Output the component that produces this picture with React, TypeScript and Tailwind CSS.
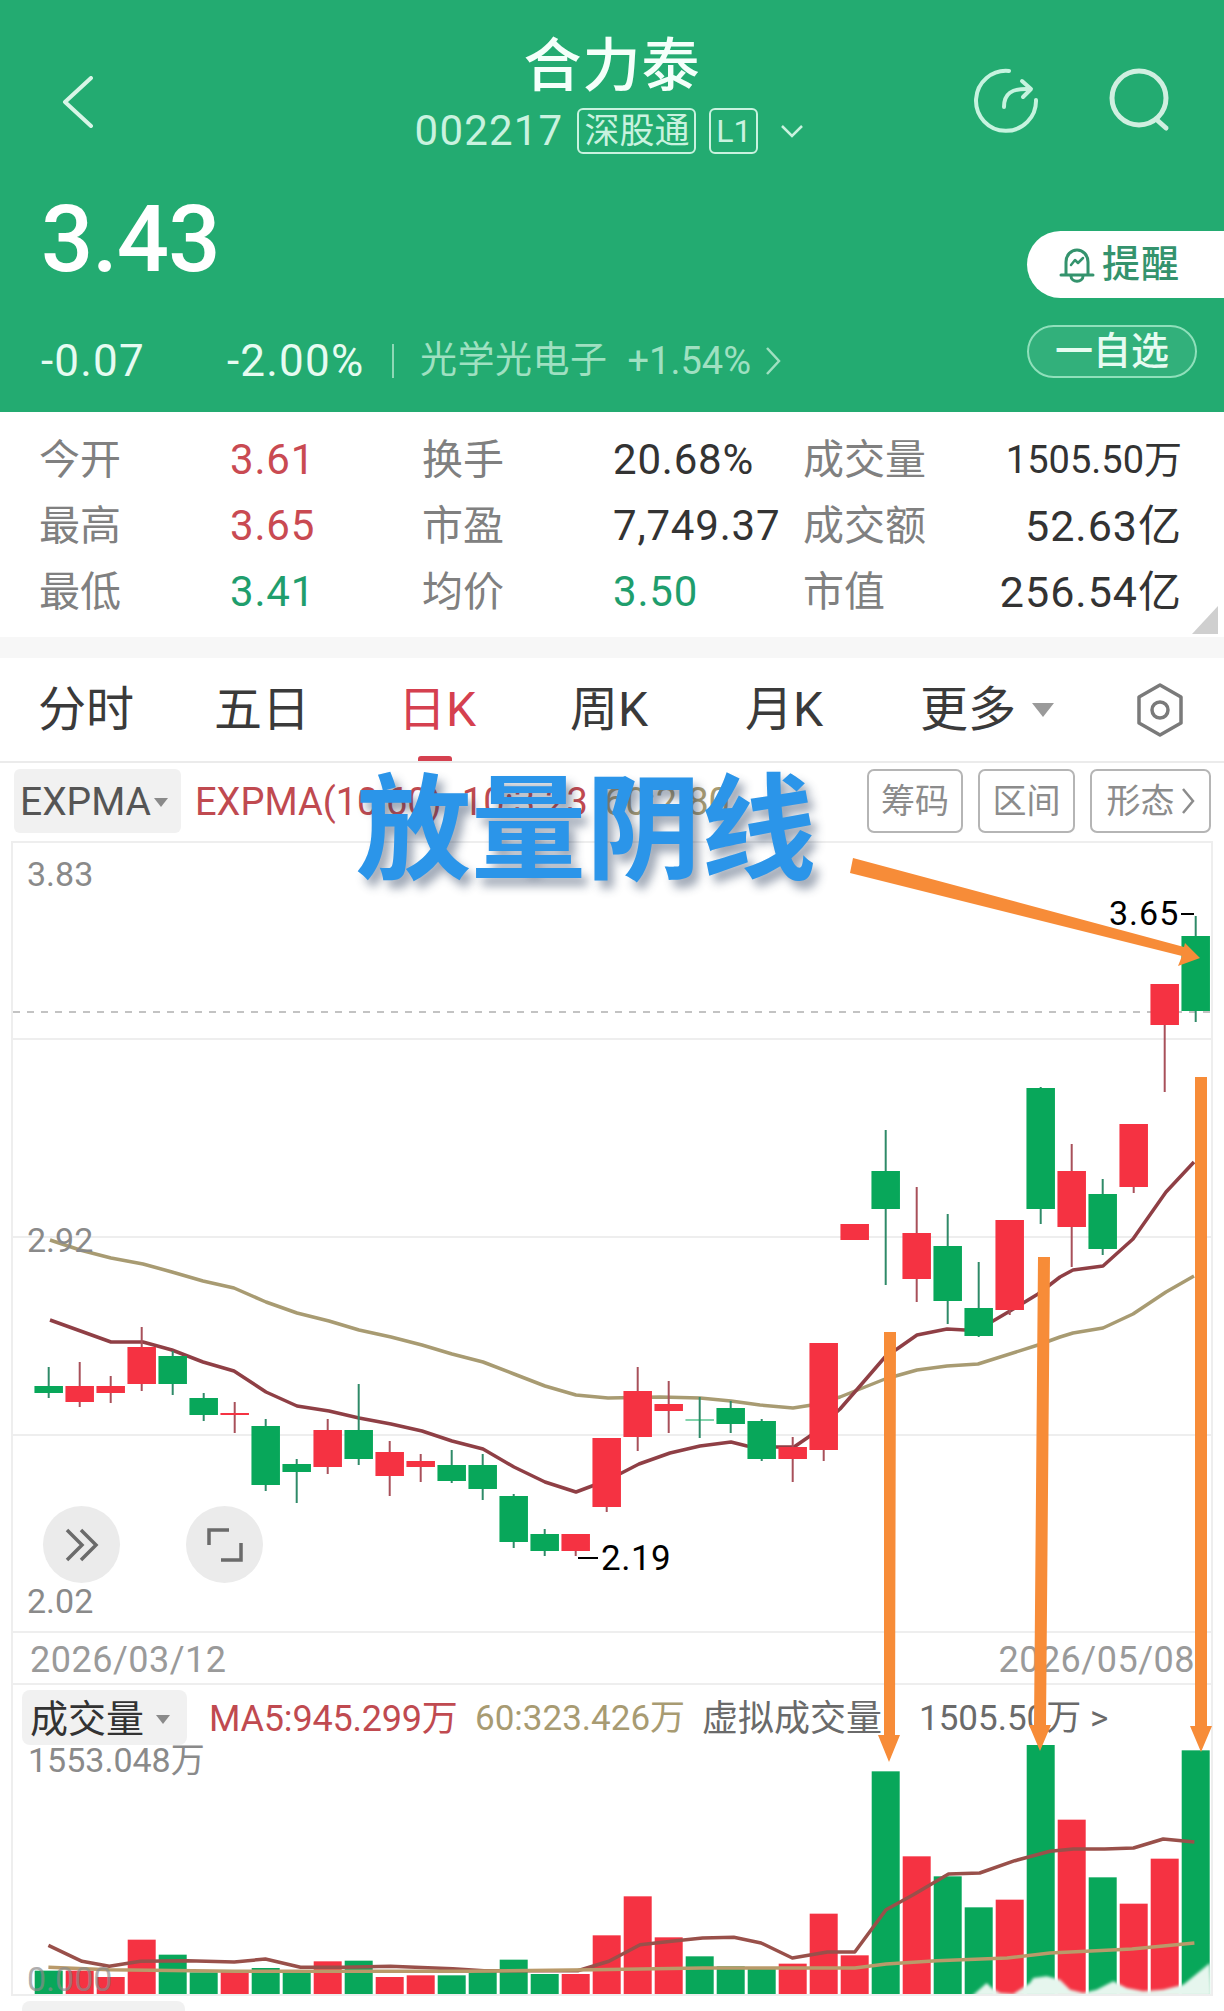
import React from "react";

type C = ["r" | "g", number, number, number, number];
const candles: C[] = [
  ["g", 1387, 1394, 1368, 1399],
  ["r", 1387, 1403, 1363, 1408],
  ["r", 1387, 1394, 1377, 1404],
  ["r", 1348, 1385, 1328, 1392],
  ["g", 1357, 1385, 1352, 1396],
  ["g", 1399, 1416, 1394, 1422],
  ["r", 1414, 1416, 1403, 1434],
  ["g", 1427, 1486, 1420, 1492],
  ["g", 1465, 1473, 1460, 1504],
  ["r", 1431, 1468, 1420, 1475],
  ["g", 1431, 1460, 1385, 1466],
  ["r", 1453, 1477, 1442, 1497],
  ["r", 1462, 1468, 1455, 1483],
  ["g", 1466, 1482, 1451, 1484],
  ["g", 1466, 1490, 1455, 1501],
  ["g", 1497, 1543, 1495, 1549],
  ["g", 1535, 1552, 1530, 1557],
  ["r", 1535, 1552, 1535, 1557],
  ["r", 1439, 1508, 1439, 1513],
  ["r", 1392, 1438, 1368, 1452],
  ["r", 1405, 1412, 1382, 1434],
  ["g", 1420.5, 1421.5, 1398, 1439],
  ["g", 1409, 1425, 1402, 1434],
  ["g", 1422, 1460, 1420, 1462],
  ["r", 1448, 1460, 1438, 1483],
  ["r", 1344, 1451, 1344, 1462],
  ["r", 1225, 1241, 1225, 1241],
  ["g", 1172, 1210, 1131, 1286],
  ["r", 1234, 1280, 1188, 1303],
  ["g", 1247, 1302, 1215, 1325],
  ["g", 1309, 1337, 1263, 1338],
  ["r", 1221, 1311, 1221, 1316],
  ["g", 1089, 1210, 1088, 1225],
  ["r", 1172, 1228, 1145, 1268],
  ["g", 1195, 1250, 1180, 1256],
  ["r", 1125, 1188, 1125, 1194],
  ["r", 985, 1026, 985, 1093],
  ["g", 937, 1012, 917, 1023],
];

const cx = (i: number) => 48.7 + 31 * i;

const redLine =
  "50,1321 111,1343 143,1343 172,1351 203,1363 234,1372 266,1393 297,1407 329,1412 359,1419 391,1425 422,1432 452,1442 483,1450 514,1468 545,1483 576,1493 608,1481 639,1465 670,1454 700,1447 731,1443 747,1447 777,1448 794,1448 810,1437 840,1410 860,1387 885,1358 897,1350 917,1336 947,1330 965,1331 993,1322 1010,1312 1038,1295 1060,1278 1073,1271 1103,1267 1133,1240 1166,1193 1194,1163";
const tanLine =
  "50,1241 80,1251 111,1259 143,1265 172,1273 203,1282 234,1289 266,1303 297,1314 329,1322 359,1331 391,1338 422,1346 452,1355 483,1363 514,1375 545,1387 576,1396 608,1399 660,1398 700,1399 731,1402 760,1406 793,1409 812,1406 840,1398 860,1390 885,1380 917,1371 947,1367 978,1365 1038,1346 1060,1338 1073,1334 1103,1329 1133,1315 1166,1293 1194,1277";

const volTops = [878, 878, 897, 785, 830, 883, 877, 870, 877, 850, 848, 897, 892, 892, 878, 845, 888, 888, 772, 655, 778, 835, 865, 868, 857, 707, 832, 280, 535, 595, 688, 665, 197, 425, 598, 677, 542, 217];

const zoomPts = (s: string) =>
  s
    .trim()
    .split(/\s+/)
    .map((p) => {
      const [x, y] = p.split(",").map(Number);
      return `${(x / 1.281).toFixed(1)},${(1680 + y / 3).toFixed(1)}`;
    })
    .join(" ");

const volRed = zoomPts(
  "62,802 105,850 140,865 180,850 240,848 300,852 340,843 385,868 440,868 500,865 580,872 620,878 740,878 780,850 820,800 860,790 900,780 940,778 975,795 1015,840 1060,822 1095,822 1135,695 1170,650 1215,588 1255,585 1300,548 1345,520 1375,513 1415,513 1452,510 1490,483 1530,492"
);
const volTan = zoomPts(
  "62,868 140,875 300,880 600,880 760,875 900,870 1095,870 1135,858 1200,848 1290,840 1345,825 1450,813 1530,795"
);

const waterPts = "215,295 260,255 275,270 300,285 340,288 390,255 400,240 440,235 480,245 510,275 550,285 590,275 640,250 680,270 730,280 790,275 850,260 930,195 935,295"
  .split(" ")
  .map((p) => {
    const [x, y] = p.split(",").map(Number);
    return `${(900 + x / 3).toFixed(1)},${(1900 + y / 3).toFixed(1)}`;
  })
  .join(" ");

const font = "[font-family:Roboto,'Noto_Sans_CJK_SC',sans-serif]";

function Label({ children }: { children: React.ReactNode }) {
  return <div className="text-[41px] leading-[66px] text-[#808080]">{children}</div>;
}
function Val({ children, tone, right }: { children: React.ReactNode; tone: string; right?: boolean }) {
  return <div className={`text-[42px] leading-[66px] tracking-[0.8px] whitespace-nowrap ${tone} ${right ? "text-right" : ""}`}>{children}</div>;
}

function ToolBtn({ children, w }: { children: React.ReactNode; w: string }) {
  return (
    <div className={`${w} h-[64px] flex items-center justify-center rounded-[7px] border-2 border-[#b5b5b5] text-[34px] text-[#8c8c8c]`}>
      {children}
    </div>
  );
}

export default function App() {
  return (
    <div className={`relative w-[1224px] h-[2011px] overflow-hidden bg-white ${font}`}>
      {/* header */}
      <div className="h-[412px] bg-[#23ab71]">
        <div className="grid grid-cols-[1fr_auto_1fr] pt-[33px] h-[154px]">
          <div className="pl-[62px] pt-[43px]">
            <svg width="32" height="52" viewBox="0 0 32 52" fill="none">
              <path d="M29 2 L3 26 L29 50" stroke="#d8f5e7" strokeWidth="4" strokeLinecap="round" strokeLinejoin="round" />
            </svg>
          </div>
          <div className="flex flex-col items-center">
            <div className="text-[58px] leading-[66px] font-medium text-[#f4fffa] tracking-[1px]">合力泰</div>
            <div className="mt-[9px] flex items-center h-[46px] text-[#c9f2df]">
              <span className="text-[42px] tracking-[1.2px] leading-[46px]">002217</span>
              <span className="ml-[14px] w-[119px] h-[46px] flex items-center justify-center rounded-[6px] border-2 border-[#c9f2df] text-[35px] leading-none">深股通</span>
              <span className="ml-[13px] w-[49px] h-[46px] flex items-center justify-center rounded-[6px] border-2 border-[#c9f2df] text-[32px] leading-none">L1</span>
              <svg className="ml-[22px] mr-[5px]" width="24" height="14" viewBox="0 0 24 14" fill="none">
                <path d="M2 2 L12 12 L22 2" stroke="#c9f2df" strokeWidth="2.5" />
              </svg>
            </div>
          </div>
          <div className="flex justify-end pr-[49px] pt-[35px] gap-[70px]">
            <svg width="66" height="68" viewBox="0 0 66 68" fill="none" stroke="#c6f3df" strokeWidth="4" strokeLinecap="round" strokeLinejoin="round">
              <path d="M36 3 A30 30 0 1 0 63 32" />
              <path d="M31 39 C31 26 38 20 57 21" />
              <path d="M49 13 L58 21 L50 29" />
            </svg>
            <svg width="66" height="68" viewBox="0 0 66 68" fill="none" stroke="#d0efe0" strokeWidth="5" strokeLinecap="round">
              <circle cx="30" cy="30" r="27" />
              <path d="M48 52 L57 60" />
            </svg>
          </div>
        </div>
        <div className="flex justify-between">
          <div className="pl-[41px] pt-[36px]">
            <div className="text-[92px] leading-[100px] font-medium text-white tracking-[-1px]">3.43</div>
            <div className="mt-[46px] flex items-center h-[50px] text-[#c9f2df]">
              <span className="w-[186px] text-[44px] tracking-[1.2px] text-[#e6fbf1]">-0.07</span>
              <span className="w-[165px] text-[44px] tracking-[1.2px] text-[#e6fbf1]">-2.00%</span>
              <span className="w-[2px] h-[34px] bg-[#8fd8b6]" />
              <span className="ml-[26px] text-[37px] text-[#9fe0c1] tracking-[0.5px]">光学光电子</span>
              <span className="ml-[20px] text-[38px] text-[#9fe0c1]">+1.54%</span>
              <svg className="ml-[14px]" width="16" height="30" viewBox="0 0 16 30" fill="none">
                <path d="M2 2 L14 15 L2 28" stroke="#9fe0c1" strokeWidth="2.5" />
              </svg>
            </div>
          </div>
          <div className="pt-[77px] flex flex-col items-end">
            <div className="w-[197px] h-[67px] bg-white rounded-l-[34px] flex items-center pl-[31px] text-[#34936d] text-[38px] font-medium">
              <svg width="38" height="38" viewBox="0 0 38 38" fill="none" stroke="#34936d" strokeWidth="3" strokeLinecap="round" strokeLinejoin="round">
                <path d="M8 28 V16 C8 9 13 4 19 4 C25 4 30 9 30 16 V28" />
                <path d="M3 29 H35" />
                <path d="M13 30 C13 37 25 37 25 30" />
                <path d="M13 19 L17 14 L20 17 L25 12" strokeWidth="2.5" />
              </svg>
              <span className="ml-[6px] tracking-[1px]">提醒</span>
            </div>
            <div className="mt-[27px] mr-[27px] w-[170px] h-[53px] rounded-[27px] border-2 border-[#8fe0bb] bg-[#32b07b] flex items-center justify-center text-[38px] font-medium text-[#e6fbf1]">
              一自选
            </div>
          </div>
        </div>
      </div>

      {/* stats */}
      <div className="relative pt-[15px] pl-[39px] pr-[42px] grid grid-cols-[191px_192px_191px_190px_150px_1fr] h-[225px] content-start">
        <Label>今开</Label>
        <Val tone="text-[#c94a52]">3.61</Val>
        <Label>换手</Label>
        <Val tone="text-[#333333]">20.68%</Val>
        <Label>成交量</Label>
        <div className="text-[38px] leading-[66px] whitespace-nowrap text-[#333333] text-right">1505.50万</div>
        <Label>最高</Label>
        <Val tone="text-[#c94a52]">3.65</Val>
        <Label>市盈</Label>
        <Val tone="text-[#333333]">7,749.37</Val>
        <Label>成交额</Label>
        <div className="text-[43px] leading-[66px] tracking-[1px] whitespace-nowrap text-[#333333] text-right">52.63亿</div>
        <Label>最低</Label>
        <Val tone="text-[#1f9e6d]">3.41</Val>
        <Label>均价</Label>
        <Val tone="text-[#1f9e6d]">3.50</Val>
        <Label>市值</Label>
        <div className="text-[43px] leading-[66px] tracking-[1px] whitespace-nowrap text-[#333333] text-right">256.54亿</div>
        <div className="absolute right-[6px] bottom-[3px] w-0 h-0 border-l-[26px] border-l-transparent border-b-[28px] border-b-[#cfcfcf]" />
      </div>
      <div className="h-[21px] bg-[#f7f7f7]" />

      {/* tabs */}
      <div className="h-[105px] grid grid-cols-[176px_184px_172px_175px_175px_215px_1fr] pl-[38px] items-center border-b-2 border-[#ebebeb] text-[48px] leading-none text-[#3a3a3a]">
        <span>分时</span>
        <span>五日</span>
        <span className="relative h-full flex items-center text-[#d5404f]">
          日K
          <span className="absolute left-[20px] bottom-0 w-[34px] h-[5px] rounded-t-[3px] bg-[#d5404f]" />
        </span>
        <span>周K</span>
        <span>月K</span>
        <span className="flex items-center">
          更多
          <span className="ml-[16px] w-0 h-0 border-x-[11px] border-x-transparent border-t-[14px] border-t-[#9a9a9a]" />
        </span>
        <svg width="50" height="56" viewBox="0 0 50 56" fill="none" stroke="#7a7a7a" strokeWidth="3.5">
          <path d="M25 3 L46 15 V41 L25 53 L4 41 V15 Z" strokeLinejoin="round" />
          <circle cx="25" cy="28" r="8" />
        </svg>
      </div>

      {/* toolbar */}
      <div className="h-[78px] pt-[6px] pl-[14px] pr-[13px] flex">
        <div className="w-[167px] h-[64px] rounded-[6px] bg-[#f1f1f1] flex items-center pl-[6px] pt-[3px] text-[39px] text-[#555555]">
          EXPMA
          <span className="ml-[3px] w-0 h-0 border-x-[7px] border-x-transparent border-t-[9px] border-t-[#8a8a8a]" />
        </div>
        <div className="ml-[14px] h-[64px] pt-[3px] flex items-center text-[38px] text-[#c04a50] whitespace-nowrap">
          <span>EXPMA(10,60)</span>
          <span className="ml-[20px]">10:3.23</span>
          <span className="ml-[16px] text-[#a89b72]">60:2.80</span>
        </div>
        <div className="ml-auto flex gap-[15px]">
          <ToolBtn w="w-[96px]">筹码</ToolBtn>
          <ToolBtn w="w-[97px]">区间</ToolBtn>
          <ToolBtn w="w-[121px]">
            形态
            <svg className="ml-[6px]" width="14" height="28" viewBox="0 0 14 28" fill="none">
              <path d="M2 2 L12 14 L2 26" stroke="#8c8c8c" strokeWidth="2.5" />
            </svg>
          </ToolBtn>
        </div>
      </div>

      {/* chart frame */}
      <div className="mx-[11px] w-[1202px] border-x-2 border-[#eeeeee]">
        <div className="relative h-[792px] border-t-2 border-b-2 border-[#eeeeee]">
          <svg className="block" width="1198" height="788" viewBox="13 844 1198 788" fill="none">
            {[1040, 1238, 1436].map((y) => (
              <line key={y} x1="13" x2="1211" y1={y} y2={y} stroke="#eeeeee" strokeWidth="2" />
            ))}
            <line x1="13" x2="1211" y1="1013" y2="1013" stroke="#b0b0b0" strokeWidth="1.5" strokeDasharray="7 7" />
            <polyline points={tanLine} stroke="#a89b72" strokeWidth="3.5" strokeLinejoin="round" />
            <polyline points={redLine} stroke="#8f3f45" strokeWidth="3.5" strokeLinejoin="round" />
            {candles.map((c, i) => {
              const x = cx(i);
              return (
                <g key={i}>
                  <line x1={x} x2={x} y1={c[3]} y2={c[4]} stroke={c[0] === "r" ? "#a8505a" : "#2f8a68"} strokeWidth="2" />
                  <rect x={x - 14.25} width="28.5" y={c[1]} height={Math.max(c[2] - c[1], 1)} fill={c[0] === "r" ? "#f53242" : "#08a75a"} />
                </g>
              );
            })}
          </svg>
          <span className="absolute left-[14px] top-[11px] text-[34px] leading-[40px] text-[#8a8a8a]">3.83</span>
          <span className="absolute left-[14px] top-[377px] text-[34px] leading-[40px] text-[#8a8a8a]">2.92</span>
          <span className="absolute left-[14px] top-[738px] text-[34px] leading-[40px] text-[#8a8a8a]">2.02</span>
          <span className="absolute left-[1096px] top-[50px] text-[34px] leading-[40px] text-black tracking-[1px]">3.65</span>
          <span className="absolute left-[1168px] top-[70px] w-[13px] h-[2px] bg-black" />
          <span className="absolute left-[565px] top-[714px] w-[20px] h-[2px] bg-black" />
          <span className="absolute left-[588px] top-[696px] text-[35px] leading-[40px] text-black tracking-[0.5px]">2.19</span>
          <div className="absolute left-[30px] top-[663px] w-[77px] h-[77px] rounded-full bg-[#ebebeb] flex items-center justify-center">
            <svg width="36" height="36" viewBox="0 0 36 36" fill="none" stroke="#6b6b6b" strokeWidth="3.5">
              <path d="M3 3 L18 18 L3 33" />
              <path d="M17 3 L32 18 L17 33" />
            </svg>
          </div>
          <div className="absolute left-[173px] top-[663px] w-[77px] h-[77px] rounded-full bg-[#ebebeb] flex items-center justify-center">
            <svg width="36" height="36" viewBox="0 0 36 36" fill="none" stroke="#6b6b6b" strokeWidth="3.5">
              <path d="M2 18 V3 H22" />
              <path d="M34 16 V33 H14" />
            </svg>
          </div>
        </div>
        {/* dates */}
        <div className="h-[52px] flex items-center justify-between pl-[17px] pr-[16px] pt-[3px] text-[36px] tracking-[0.5px] text-[#9a9a9a] border-b-2 border-[#eeeeee]">
          <span>2026/03/12</span>
          <span>2026/05/08</span>
        </div>
        {/* volume */}
        <div className="h-[60px] pt-[5px] pl-[9px] flex items-start whitespace-nowrap">
          <div className="w-[165px] h-[55px] rounded-[8px] bg-[#f1f1f1] flex items-center pl-[8px] pt-[3px] text-[38px] text-[#333333]">
            成交量
            <span className="ml-[12px] w-0 h-0 border-x-[7px] border-x-transparent border-t-[9px] border-t-[#8a8a8a]" />
          </div>
          <div className="ml-[22px] h-[55px] pt-[3px] flex items-center text-[36px]">
            <span className="w-[266px] text-[#c04a50] tracking-[-0.2px]">MA5:945.299万</span>
            <span className="w-[227px] text-[35px] text-[#a89b72]">60:323.426万</span>
            <span className="w-[217px] text-[#6a6a6a]">虚拟成交量</span>
            <span className="text-[35px] text-[#6a6a6a]">1505.50万 &gt;</span>
          </div>
        </div>
        <div className="relative h-[251px] border-b-2 border-[#eeeeee]">
          <svg className="block" width="1198" height="249" viewBox="13 1747 1198 249" fill="none">
            <defs>
              <filter id="soft" x="-5%" y="-30%" width="110%" height="160%">
                <feGaussianBlur stdDeviation="1.5" />
              </filter>
            </defs>
            {volTops.map((t, i) => {
              const y = 1680 + t / 3;
              return <rect key={i} x={cx(i) - 14} width="28" y={y} height={1996 - y} fill={candles[i][0] === "r" ? "#f53242" : "#08a75a"} />;
            })}
            <polyline points={volRed} stroke="#99504a" strokeWidth="3.5" strokeLinejoin="round" />
            <polyline points={volTan} stroke="#b99a6a" strokeWidth="3.5" strokeLinejoin="round" />
            <polygon points={waterPts} fill="#e6f6ee" filter="url(#soft)" />
          </svg>
          <span className="absolute left-[15px] -top-[2px] text-[34px] leading-[34px] text-[#8a8a8a]">1553.048万</span>
          <span className="absolute left-[14px] top-[217px] text-[34px] leading-[34px] text-[#8a8a8a]/70">0.000</span>
        </div>
      </div>
      <div className="ml-[22px] mt-[5px] w-[163px] h-[10px] rounded-t-[8px] bg-[#f1f1f1]" />

      {/* annotation overlay */}
      <svg className="absolute left-0 top-0 pointer-events-none" width="1224" height="2011" viewBox="0 0 1224 2011" fill="#f78c38">
        <polygon points="884,1332 896,1332 895,1735 900,1735 889,1762 878,1735 884,1735" />
        <polygon points="1038,1257 1050,1257 1046,1725 1051,1725 1040,1751 1029,1725 1034,1725" />
        <polygon points="1195,1077 1207,1077 1207,1726 1212,1726 1201,1752 1190,1726 1195,1726" />
        <polygon points="853,858 850,873 1182,956 1178,966 1200,958 1185,943 1184,947" />
      </svg>
      <div className="absolute left-[356px] top-[750px] whitespace-nowrap text-[115px] leading-[140px] font-bold text-[#2b95e9] [font-family:'Noto_Sans_CJK_SC',sans-serif] [text-shadow:6px_8px_10px_rgba(40,60,90,0.45)]">
        放量阴线
      </div>
    </div>
  );
}
